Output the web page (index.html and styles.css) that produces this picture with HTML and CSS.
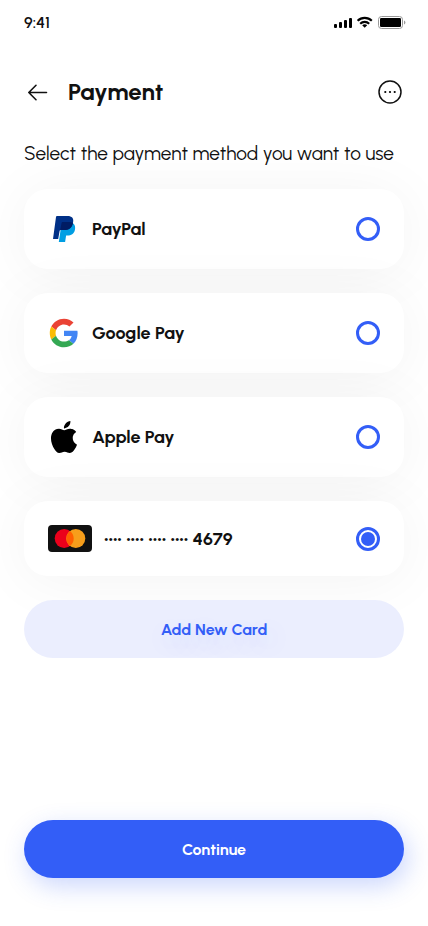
FILE: index.html
```html
<!DOCTYPE html>
<html lang="en">
<head>
<meta charset="utf-8">
<meta name="viewport" content="width=device-width, initial-scale=1">
<title>Payment</title>
<link rel="stylesheet" href="styles.css">
</head>
<body>
<div class="screen">
  <div class="status-bar">
    <span class="clock">9:41</span>
    <svg class="status-icons" width="72" height="14" viewBox="0 0 72 14" aria-hidden="true">
      <rect x="0" y="9" width="3" height="4" rx="1"/>
      <rect x="5" y="7" width="3" height="6" rx="1"/>
      <rect x="10" y="5" width="3" height="8" rx="1"/>
      <rect x="15" y="3" width="3" height="10" rx="1"/>
      <g fill="none" stroke="#000" stroke-width="2.1">
        <path d="M23.6 5.800a10.200 10.200 0 0 1 14.200 0"/>
        <path d="M26.200 8.700a6.500 6.500 0 0 1 9 0"/>
      </g>
      <path d="M28.200 10.300a3.700 3.700 0 0 1 5 0L30.700 12.800z"/>
      <rect x="44.500" y="1.500" width="24" height="12" rx="3" fill="none" stroke="#999"/>
      <rect x="46" y="3" width="21" height="9" rx="1.200"/>
      <path d="M70 5.500v4q1.400-.6 1.400-2T70 5.500z" fill="#999"/>
    </svg>
  </div>

  <header class="top-bar">
    <button class="icon-button" type="button" aria-label="Back">
      <svg width="28" height="28" viewBox="0 0 28 28" fill="none" stroke="#111" stroke-width="1.6" stroke-linecap="round" stroke-linejoin="round"><path d="M22.500 14.500H4.800M12 7.300L4.800 14.500l7.200 7.200"/></svg>
    </button>
    <h1>Payment</h1>
    <button class="icon-button" type="button" aria-label="More options">
      <svg width="28" height="28" viewBox="0 0 28 28"><circle cx="14" cy="14" r="11" fill="none" stroke="#111" stroke-width="1.5"/><circle cx="9.300" cy="14" r="1.100"/><circle cx="14" cy="14" r="1.100"/><circle cx="18.700" cy="14" r="1.100"/></svg>
    </button>
  </header>

  <main>
    <p class="intro" id="intro">Select the payment method you want to use</p>
    <form class="methods" id="payment-form" aria-labelledby="intro">
      <label class="method">
        <svg class="logo" width="32" height="32" viewBox="0 0 32 32" aria-hidden="true">
          <path fill="#009ee3" d="M13.500 11l11.500-.800q2.900 2.200 1.900 6.800c-1 4-3.700 5.500-7.400 5.500h-1.400l-1 6.500h-6.300z"/>
          <path fill="#003087" d="M9 3h10.600c4.200 0 6.300 2.200 5.500 6.300C24.200 14.500 21 17 16.200 17h-3.500c-.6 0-1 .4-1.100 1l-1.400 8H5L8 4q.1-1 1-1z"/>
          <path fill="#001c64" d="M13.500 10.200c.1-.8.600-1.200 1.300-1.200h5.800c1.800 0 3.300.2 4.400.9-1 4.900-4.100 7.100-8.800 7.100h-3.500l-.5.300z"/>
        </svg>
        <span class="name">PayPal</span>
        <input type="radio" name="method" value="paypal">
      </label>
      <label class="method">
        <svg class="logo" width="32" height="32" viewBox="-3 -3 54 54" aria-hidden="true">
          <path fill="#EA4335" d="M24 9.500c3.540 0 6.710 1.220 9.210 3.600l6.850-6.850C35.900 2.380 30.470 0 24 0 14.620 0 6.510 5.380 2.560 13.220l7.980 6.190C12.430 13.720 17.740 9.500 24 9.500z"/>
          <path fill="#4285F4" d="M46.980 24.550c0-1.570-.15-3.090-.38-4.550H24v9.020h12.940c-.58 2.960-2.260 5.480-4.780 7.180l7.730 6c4.510-4.180 7.090-10.360 7.090-17.650z"/>
          <path fill="#FBBC05" d="M10.530 28.590c-.48-1.450-.76-2.990-.76-4.590s.27-3.140.76-4.590l-7.980-6.190C.92 16.460 0 20.120 0 24c0 3.880.92 7.540 2.560 10.780l7.970-6.190z"/>
          <path fill="#34A853" d="M24 48c6.480 0 11.930-2.130 15.890-5.810l-7.730-6c-2.150 1.450-4.920 2.300-8.160 2.300-6.260 0-11.570-4.220-13.470-9.910l-7.980 6.190C6.510 42.620 14.620 48 24 48z"/>
        </svg>
        <span class="name">Google Pay</span>
        <input type="radio" name="method" value="google-pay">
      </label>
      <label class="method">
        <svg class="logo" width="32" height="32" viewBox="0 0 24 24" aria-hidden="true">
          <path d="M12.152 6.896c-.948 0-2.415-1.078-3.960-1.040-2.040.027-3.910 1.183-4.961 3.014-2.117 3.675-.546 9.103 1.519 12.090 1.013 1.454 2.208 3.090 3.792 3.039 1.520-.065 2.090-.987 3.935-.987 1.831 0 2.350.987 3.960.948 1.637-.026 2.676-1.480 3.676-2.948 1.156-1.688 1.636-3.325 1.662-3.415-.039-.013-3.182-1.221-3.220-4.857-.026-3.040 2.480-4.494 2.597-4.559-1.429-2.090-3.623-2.324-4.390-2.376-2-.156-3.675 1.090-4.610 1.090zM15.530 3.830c.843-1.012 1.400-2.427 1.245-3.830-1.207.052-2.662.805-3.532 1.818-.780.896-1.454 2.338-1.273 3.714 1.338.104 2.715-.688 3.559-1.701"/>
        </svg>
        <span class="name">Apple Pay</span>
        <input type="radio" name="method" value="apple-pay">
      </label>
      <label class="method">
        <svg class="logo" width="44" height="27" viewBox="0 0 44 27" aria-hidden="true">
          <rect width="44" height="27" rx="4" fill="#111"/>
          <circle cx="16.200" cy="13.500" r="9.500" fill="#eb001b"/>
          <circle cx="27.800" cy="13.500" r="9.500" fill="#f79e1b"/>
          <path fill="#ff5f00" d="M22 5.980a9.500 9.500 0 0 1 0 15.040a9.500 9.500 0 0 1 0-15.040z"/>
        </svg>
        <span class="name">•••• •••• •••• •••• 4679</span>
        <input type="radio" name="method" value="card" checked>
      </label>
    </form>
    <button class="pill add-card" type="button">Add New Card</button>
  </main>

  <button class="pill continue" type="submit" form="payment-form">Continue</button>
</div>
</body>
</html>
```
FILE: styles.css
```css
* {
  box-sizing: border-box;
}

body {
  margin: 0;
  background: #fff;
  color: #111;
  font-family: Urbanist, Lato, "Liberation Sans", sans-serif;
}

button {
  border: 0;
  font: inherit;
  cursor: pointer;
}

svg {
  display: block;
  flex: none;
}

.screen {
  display: flex;
  flex-direction: column;
  min-height: 100vh;
  padding: 0 24px 48px;
  overflow: hidden;
}

.status-bar {
  display: flex;
  align-items: center;
  justify-content: space-between;
  height: 44px;
  margin-right: -2px;
}

.clock {
  font-size: 16px;
  font-weight: 600;
}

.top-bar {
  display: flex;
  align-items: center;
  gap: 16px;
  height: 48px;
  margin-top: 24px;
}

h1 {
  flex: 1;
  margin: 0;
  font-size: 24px;
  line-height: 34px;
  font-weight: 700;
}

.icon-button {
  padding: 0;
  background: none;
}

.intro {
  margin: 24px 0 22px;
  font-size: 19px;
  line-height: 27px;
  font-weight: 400;
}

.methods {
  display: flex;
  flex-direction: column;
  gap: 24px;
}

.method {
  display: flex;
  align-items: center;
  gap: 12px;
  padding: 24px;
  border-radius: 24px;
  background: #fff;
  box-shadow: 0 4px 60px rgba(4, 6, 15, 0.05);
  cursor: pointer;
}

.name {
  flex: 1;
  font-size: 18px;
  line-height: 24px;
  font-weight: 700;
}

.method input {
  appearance: none;
  width: 24px;
  height: 24px;
  margin: 0;
  border: 3px solid #335ef7;
  border-radius: 50%;
  cursor: pointer;
}

.method input:checked {
  padding: 2px;
  background: #335ef7 content-box;
}

.pill {
  width: 100%;
  height: 58px;
  padding: 2px 24px 0;
  border-radius: 29px;
  font-size: 16px;
  line-height: 22px;
  font-weight: 700;
}

.add-card {
  position: relative;
  margin-top: 24px;
  background: #ebeefe;
  color: #335ef7;
  text-shadow: 4px 8px 24px rgba(51, 94, 247, 0.2);
}

.continue {
  margin-top: auto;
  background: #335ef7;
  color: #fff;
  box-shadow: 4px 8px 24px rgba(51, 94, 247, 0.25);
}
```
